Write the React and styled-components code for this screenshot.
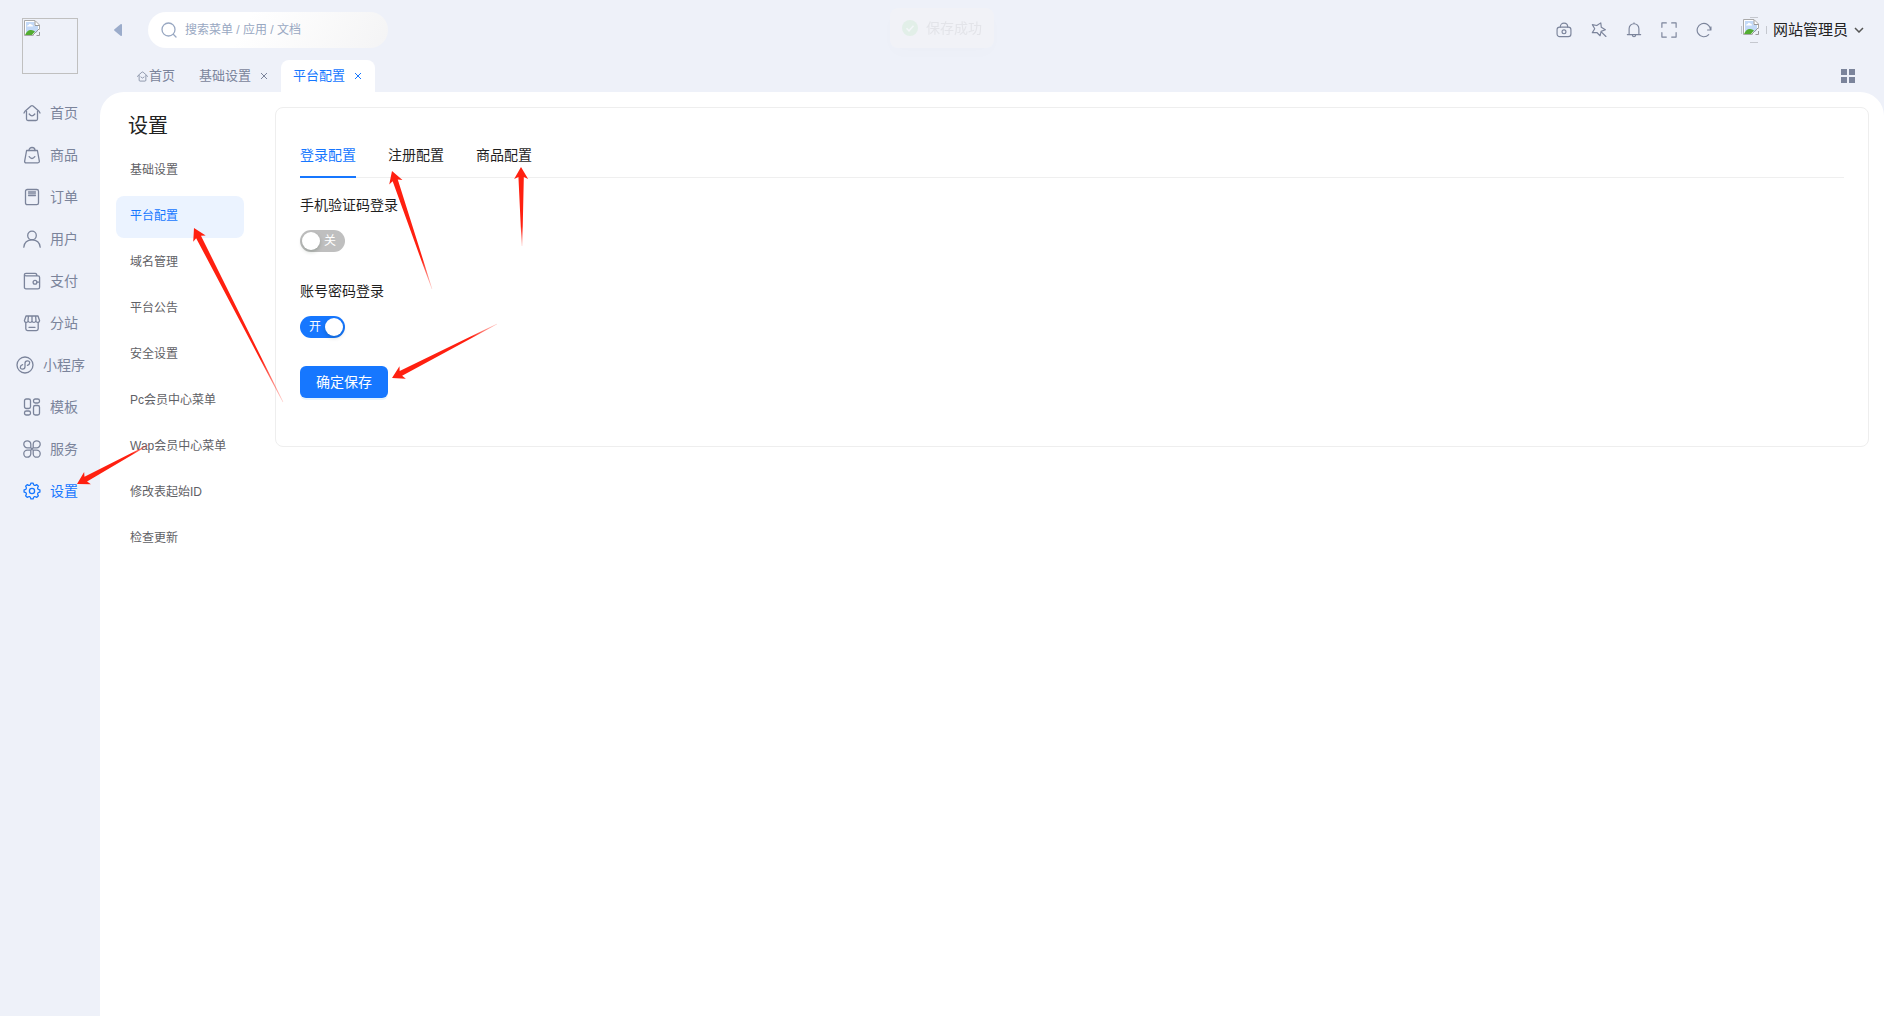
import React, { useState } from "react";
import styled, { createGlobalStyle } from "styled-components";

const GlobalStyle = createGlobalStyle`
  * {
    box-sizing: border-box;
  }
  body {
    margin: 0;
    background: #eef1f9;
    font-family: "Liberation Sans", "Noto Sans CJK SC", sans-serif;
    font-size: 14px;
    line-height: 22px;
    color: #1f1f1f;
  }
  button, input {
    font: inherit;
    color: inherit;
  }
  button {
    border: 0;
    padding: 0;
    background: none;
    cursor: pointer;
  }
  a {
    color: inherit;
    text-decoration: none;
  }
`;

const Layout = styled.div`
  display: flex;
  min-height: 100vh;
`;

const Sidebar = styled.nav`
  width: 100px;
  flex: none;
`;

const Logo = styled.a`
  display: block;
  width: 56px;
  height: 56px;
  margin: 18px 22px;
  padding: 1px;
  border: 1px solid #c0c0c0;
  svg {
    display: block;
  }
`;

const SideLink = styled.a`
  display: flex;
  align-items: center;
  justify-content: center;
  gap: 9px;
  height: 42px;
  padding-left: 1px;
  color: ${(props) => (props.$active ? "#1677ff" : "#7b849b")};
`;

const Main = styled.div`
  display: flex;
  flex-direction: column;
  flex: 1;
  min-width: 0;
`;

const Header = styled.header`
  display: flex;
  align-items: center;
  height: 60px;
  padding: 0 20px 0 12px;
`;

const CollapseButton = styled.button`
  display: flex;
  width: 12px;
  height: 20px;
  align-items: center;
  justify-content: center;
  color: #9baccb;
`;

const Search = styled.label`
  display: flex;
  align-items: center;
  gap: 7px;
  width: 240px;
  height: 36px;
  margin-left: 24px;
  padding: 0 12px;
  border-radius: 18px;
  background: linear-gradient(120deg, #fff 40%, #f4f4f5);
  color: #99a8c2;
`;

const SearchInput = styled.input`
  flex: 1;
  min-width: 0;
  padding: 0;
  border: 0;
  outline: 0;
  background: none;
  font-size: 12px;
  &::placeholder {
    color: #99a8c2;
    opacity: 1;
  }
`;

const Tools = styled.div`
  display: flex;
  align-items: center;
  gap: 17px;
  margin-left: auto;
  color: #7b849b;
`;

const ToolButton = styled.button`
  display: flex;
  align-items: center;
  justify-content: center;
  width: 18px;
  height: 18px;
`;

const UserButton = styled.button`
  display: flex;
  align-items: center;
  gap: 6px;
  margin-left: 11px;
  color: #222;
  font-size: 15px;
`;

const PageTabs = styled.div`
  display: flex;
  height: 32px;
  padding: 0 29px 0 25px;
`;

const PageTab = styled.div`
  display: flex;
  align-items: center;
  gap: 8px;
  padding: 0 12px;
  border-radius: 8px 8px 0 0;
  font-size: 13px;
  background: ${(props) => (props.$active ? "#fff" : "transparent")};
  color: ${(props) => (props.$active ? "#1677ff" : "#7b849b")};
`;

const TabLink = styled.a`
  display: flex;
  align-items: center;
  gap: 1px;
`;

const CloseButton = styled.button`
  display: flex;
  width: 10px;
`;

const GridButton = styled.button`
  display: flex;
  align-items: center;
  margin-left: auto;
  color: #7b849b;
`;

const Panel = styled.main`
  display: flex;
  align-items: flex-start;
  flex: 1;
  padding: 0 15px 15px;
  border-radius: 24px 24px 0 0;
  background: #fff;
`;

const SubMenu = styled.nav`
  display: flex;
  flex-direction: column;
  gap: 4px;
  width: 130px;
  flex: none;
  padding: 0 1px;
`;

const SubTitle = styled.h1`
  height: 54px;
  margin: 0;
  padding: 18px 12px 0;
  font-size: 20px;
  line-height: 32px;
  font-weight: 400;
  color: #222;
`;

const SubLink = styled.a`
  padding: 9px 14px 11px;
  border-radius: 8px;
  font-size: 12px;
  background: ${(props) => (props.$active ? "#ebf3ff" : "transparent")};
  color: ${(props) => (props.$active ? "#1677ff" : "#5f6166")};
`;

const Card = styled.section`
  flex: 1;
  min-width: 0;
  margin: 15px 0 0 30px;
  padding: 24px;
  border: 1px solid #eee;
  border-radius: 8px;
`;

const TabBar = styled.div`
  display: flex;
  gap: 32px;
  height: 46px;
  margin-bottom: 16px;
  box-shadow: inset 0 -1px #efefef;
`;

const TabButton = styled.button`
  padding-top: 2px;
  border-bottom: 2px solid ${(props) => (props.$active ? "#1677ff" : "transparent")};
  color: ${(props) => (props.$active ? "#1677ff" : "#1f1f1f")};
`;

const Form = styled.form`
  display: flex;
  flex-direction: column;
  align-items: flex-start;
  gap: 24px;
  margin-bottom: 24px;
`;

const Field = styled.div`
  display: flex;
  flex-direction: column;
  gap: 14px;
  height: 62px;
`;

const SwitchBox = styled.span`
  display: grid;
  width: 45px;
  height: 22px;
`;

const SwitchInput = styled.input`
  grid-area: 1 / 1;
  display: flex;
  justify-content: flex-start;
  appearance: none;
  margin: 0;
  padding: 2px;
  border-radius: 11px;
  background: #bfbfbf;
  cursor: pointer;
  &::before {
    content: "";
    width: 18px;
    height: 18px;
    border-radius: 50%;
    background: #fff;
    box-shadow: 0 2px 4px rgba(0, 35, 11, 0.2);
  }
  &:checked {
    justify-content: flex-end;
    background: #1677ff;
  }
`;

const SwitchText = styled.span`
  grid-area: 1 / 1;
  z-index: 1;
  padding: 0 9px;
  text-align: ${(props) => (props.$on ? "left" : "right")};
  font-size: 12px;
  color: #fff;
  pointer-events: none;
`;

const SaveButton = styled.button`
  height: 32px;
  padding: 0 16px;
  border-radius: 6px;
  background: #1677ff;
  box-shadow: 0 2px 0 rgba(5, 145, 255, 0.1);
  color: #fff;
`;

const Toast = styled.div`
  position: fixed;
  top: 8px;
  left: 50%;
  transform: translateX(-50%);
  display: flex;
  align-items: center;
  gap: 8px;
  padding: 9px 12px;
  border-radius: 8px;
  background: #f1f2f7;
  box-shadow: 0 6px 16px rgba(0, 0, 0, 0.01);
  color: #e3e4e9;
`;

const Arrows = styled.svg`
  position: absolute;
  top: 0;
  left: 0;
  pointer-events: none;
`;

// eight rounded teeth around the centre of the 18px box
const gearPath = () => {
  const at = (deg, r) => {
    const a = (deg * Math.PI) / 180;
    return `${(9 + r * Math.sin(a)).toFixed(2)} ${(9 - r * Math.cos(a)).toFixed(2)}`;
  };
  let d = `M${at(-8, 8)}`;
  for (let deg = 0; deg < 360; deg += 45) {
    d += `L${at(deg + 8, 8)}Q${at(deg + 22.5, 4.6)} ${at(deg + 37, 8)}`;
  }
  return `${d}z`;
};

const iconPaths = {
  home: <><path d="M3.5 7.2V15a1.5 1.5 0 0 0 1.5 1.5h8a1.5 1.5 0 0 0 1.5-1.5V7.2" /><path d="M1 9 2 7.2 8 2q1-.8 2 0l6 5.2 1 1.8" /><path d="M6.2 10q2.8 3.6 5.6 0" /></>,
  goods: <><path d="M3.600 4.500h10.800l2 10.800q0 1.500-1.500 1.500H3.100q-1.500 0-1.500-1.500z" /><path d="M6 4.500c0-4 6-4 6 0M6.200 10.600q2.800 3.800 5.600 0" /></>,
  order: <><rect x="2.500" y="1.500" width="13" height="15.200" rx="1.800" /><path d="M5.500 4h7M5.500 5.800h7M5.500 7.600h7" /></>,
  user: <><circle cx="9" cy="5.400" r="4.300" /><path d="M.8 17.200c.5-4.600 3.800-7.300 8.200-7.300s7.700 2.700 8.200 7.300" /></>,
  pay: <><path d="M1.400 3q0 .8 1.600.8h12q1.600 0 1.600 1.600v9.800q0 1.600-1.600 1.600H3q-1.600 0-1.600-1.600V3q0-1.600 1.600-1.600h9.200q1.600 0 1.600 2.200" /><circle cx="12" cy="10.200" r="1.900" /><path d="M13.900 10.200h2.500" /></>,
  shop: <><path d="M2.800 8.500v6.300q0 1.800 1.800 1.800h8.800q1.800 0 1.800-1.800V8.500M6 13.300h6" /><path d="M3 2h12l1.600 4.800c-.2 2.200-3.200 2.200-3.800 0-.6 2.200-3.200 2.200-3.800 0-.6 2.200-3.200 2.200-3.800 0-.6 2.200-3.600 2.200-3.800 0zM5.400 2.300 5 6.500M9 2.300v4.200M12.600 2.300l.4 4.200" /></>,
  mini: <><circle cx="9" cy="9" r="8" /><path d="M6.600 8.700c-3 .8-3 4.500-.1 4.500 1.500 0 2.500-1.100 2.500-2.400V7.200c0-1.300 1-2.400 2.500-2.400 2.900 0 2.900 3.700-.1 4.500" /></>,
  template: <><rect x="1.500" y="1" width="6" height="9.500" rx="1.800" /><rect x="10.500" y="1" width="6" height="4" rx="1.800" /><rect x="10.500" y="7.500" width="6" height="9.500" rx="1.800" /><rect x="1.500" y="13" width="6" height="4" rx="1.800" /></>,
  service: <path d="M7.800 7.800V4.300a3.500 3.500 0 1 0-3.500 3.500zM10.200 7.800V4.300a3.500 3.500 0 1 1 3.500 3.500zM7.800 10.200v3.500a3.500 3.500 0 1 1-3.500-3.500zM10.200 10.200v3.500a3.500 3.500 0 1 0 3.500-3.500zM7.800 7.800l2.400 2.400M10.200 7.800l-2.400 2.400" />,
  setting: <><path d={gearPath()} /><circle cx="9" cy="9" r="2.600" /></>,
  search: <><circle cx="8.500" cy="8.500" r="6.500" /><path d="m13.500 13.500 2.500 2.500" /></>,
  lock: <><rect x="1.200" y="5.800" width="15.600" height="10.700" rx="3" /><path d="M4.800 5.800c0-6 8.400-6 8.400 0" /><circle cx="9" cy="11" r="2.200" /></>,
  pin: <path d="m1.500 3 5 1L11 1l.6 5 4.600 2.800-4.800 1.700-1.200 5-3.600-3.700-5.100.2L4.200 7.600zM11.800 11.300l5 5" />,
  bell: <path d="M1.500 14.200h15M3.500 14.200V7.500a5.500 5.500 0 0 1 11 0v6.700M7 14.500c.5 2.800 3.500 2.800 4 0M9 1v1" />,
  full: <path d="M1 6V1h5M12 1h5v5M17 12v5h-5M6 17H1v-5" />,
  refresh: <path d="M14.300 14.200A7.500 7.500 0 1 1 16.300 8.500M13 9h3.800V5.500" />,
};

const Icon = ({ name, size = 18 }) => (
  <svg
    width={size}
    height={size}
    viewBox="0 0 18 18"
    fill="none"
    stroke="currentColor"
    strokeWidth="1.3"
    strokeLinecap="round"
    strokeLinejoin="round"
    aria-hidden="true"
  >
    {iconPaths[name]}
  </svg>
);

const picture = (
  <>
    <path d="M.5.500h10.500l4.500 4.500v10.500H.5z" fill="#fff" stroke="#a9a9a9" />
    <path d="M2 2h8.500v4H14v7H2z" fill="#c3d9f7" />
    <path d="M3 6.500q0-1.700 1.700-1.500Q5.500 3 7.200 4.500 9 4.500 9 6.500z" fill="#fff" />
    <path d="M1 15q2-4.500 5-5 3-.5 5 1.500L8 15z" fill="#53ad32" />
    <path d="m9 16 7-7v7z" fill="#eef1f9" />
    <path d="m9 15 6-6M11 1v4.500h4.500M12.500 15.500h3V12" fill="none" stroke="#999" />
  </>
);

const Picture = () => (
  <svg width="16" height="16" viewBox="0 0 16 16" aria-hidden="true">{picture}</svg>
);

const Avatar = () => (
  <svg width="26" height="26" viewBox="0 0 26 26" aria-hidden="true">
    <path d="M9 .5h8M9 25.500h8M.5 9v8M25.500 9v8" stroke="#c5c8cf" />
    <g transform="translate(2 2)">{picture}</g>
  </svg>
);

const sideItems = [
  ["home", "首页"],
  ["goods", "商品"],
  ["order", "订单"],
  ["user", "用户"],
  ["pay", "支付"],
  ["shop", "分站"],
  ["mini", "小程序"],
  ["template", "模板"],
  ["service", "服务"],
  ["setting", "设置"],
];

const subItems = [
  "基础设置",
  "平台配置",
  "域名管理",
  "平台公告",
  "安全设置",
  "Pc会员中心菜单",
  "Wap会员中心菜单",
  "修改表起始ID",
  "检查更新",
];

const tools = [
  ["lock", "锁屏"],
  ["pin", "清除缓存"],
  ["bell", "通知"],
  ["full", "全屏"],
  ["refresh", "刷新"],
];

// tip x, tip y, tail x, tail y
const arrows = [
  [77, 484, 150, 444],
  [194, 228, 283, 402],
  [392, 171, 432, 289],
  [521, 167, 522, 246],
  [392, 378, 497, 324],
];

const Arrow = ({ id, points: [x, y, tx, ty] }) => {
  const length = Math.hypot(tx - x, ty - y);
  const ux = (tx - x) / length;
  const uy = (ty - y) / length;
  const at = (along, side) => `${x + ux * along - uy * side},${y + uy * along + ux * side}`;
  return (
    <>
      <linearGradient id={id} gradientUnits="userSpaceOnUse" x1={x} y1={y} x2={tx} y2={ty}>
        <stop offset="0.75" stopColor="#ff2010" />
        <stop offset="1" stopColor="#ff2010" stopOpacity="0.2" />
      </linearGradient>
      <polygon
        fill={`url(#${id})`}
        points={[at(0, 0), at(12, 7), at(10, 2.7), at(length, 0.3), at(length, -0.3), at(10, -2.7), at(12, -7)].join(" ")}
      />
    </>
  );
};

const Close = ({ label }) => (
  <CloseButton aria-label={label}>
    <svg width="10" height="10" viewBox="0 0 10 10" stroke="currentColor" aria-hidden="true">
      <path d="m2 2 6 6M8 2 2 8" />
    </svg>
  </CloseButton>
);

const Switch = ({ id, label, defaultOn }) => {
  const [on, setOn] = useState(defaultOn);
  return (
    <Field>
      <label htmlFor={id}>{label}</label>
      <SwitchBox>
        <SwitchInput id={id} type="checkbox" role="switch" checked={on} onChange={() => setOn(!on)} />
        <SwitchText $on={on}>{on ? "开" : "关"}</SwitchText>
      </SwitchBox>
    </Field>
  );
};

export default () => {
  const [tab, setTab] = useState("登录配置");

  return (
    <>
      <GlobalStyle />
      <Layout>
        <Sidebar>
          <Logo href="#" aria-label="首页"><Picture /></Logo>
          {sideItems.map(([icon, text]) => (
            <SideLink key={icon} href="#" $active={icon === "setting"}>
              <Icon name={icon} />
              {text}
            </SideLink>
          ))}
        </Sidebar>
        <Main>
          <Header>
            <CollapseButton aria-label="收起菜单">
              <svg width="8" height="12" viewBox="0 0 8 12" fill="currentColor" aria-hidden="true">
                <path d="M8 1v10q0 1.500-1.500.7L.5 6.700q-.8-.7 0-1.400l6-5Q8-.5 8 1z" />
              </svg>
            </CollapseButton>
            <Search>
              <Icon name="search" />
              <SearchInput aria-label="搜索" placeholder="搜索菜单 / 应用 / 文档" />
            </Search>
            <Tools>
              {tools.map(([icon, text]) => (
                <ToolButton key={icon} aria-label={text}><Icon name={icon} size={16} /></ToolButton>
              ))}
              <UserButton>
                <Avatar />
                网站管理员
                <svg width="10" height="6" viewBox="0 0 10 6" fill="none" stroke="#555" strokeWidth="1.5" aria-hidden="true">
                  <path d="m1 1 4 4 4-4" />
                </svg>
              </UserButton>
            </Tools>
          </Header>
          <PageTabs>
            <PageTab>
              <TabLink href="#"><Icon name="home" size={11} />首页</TabLink>
            </PageTab>
            <PageTab>
              <TabLink href="#">基础设置</TabLink>
              <Close label="关闭基础设置" />
            </PageTab>
            <PageTab $active>
              <TabLink href="#">平台配置</TabLink>
              <Close label="关闭平台配置" />
            </PageTab>
            <GridButton aria-label="标签页操作">
              <svg width="14" height="14" viewBox="0 0 14 14" fill="currentColor" aria-hidden="true">
                <path d="M0 0h6v6H0zM8 0h6v6H8zM0 8h6v6H0zM8 8h6v6H8z" />
              </svg>
            </GridButton>
          </PageTabs>
          <Panel>
            <SubMenu>
              <SubTitle>设置</SubTitle>
              {subItems.map((text) => (
                <SubLink key={text} href="#" $active={text === "平台配置"}>{text}</SubLink>
              ))}
            </SubMenu>
            <Card>
              <TabBar role="tablist">
                {["登录配置", "注册配置", "商品配置"].map((text) => (
                  <TabButton
                    key={text}
                    role="tab"
                    aria-selected={tab === text}
                    $active={tab === text}
                    onClick={() => setTab(text)}
                  >
                    {text}
                  </TabButton>
                ))}
              </TabBar>
              <Form onSubmit={(e) => e.preventDefault()}>
                <Switch id="sms" label="手机验证码登录" defaultOn={false} />
                <Switch id="password" label="账号密码登录" defaultOn />
                <SaveButton type="submit">确定保存</SaveButton>
              </Form>
            </Card>
          </Panel>
        </Main>
      </Layout>
      <Toast role="status">
        <svg width="16" height="16" viewBox="0 0 16 16" aria-hidden="true">
          <circle cx="8" cy="8" r="8" fill="#e2efe8" />
          <path d="m4.500 8.200 2.500 2.600 4.500-5" fill="none" stroke="#f3f6f8" strokeWidth="1.5" />
        </svg>
        保存成功
      </Toast>
      <Arrows width="600" height="520" aria-hidden="true">
        {arrows.map((points, i) => (
          <Arrow key={i} id={`arrow${i}`} points={points} />
        ))}
      </Arrows>
    </>
  );
};
